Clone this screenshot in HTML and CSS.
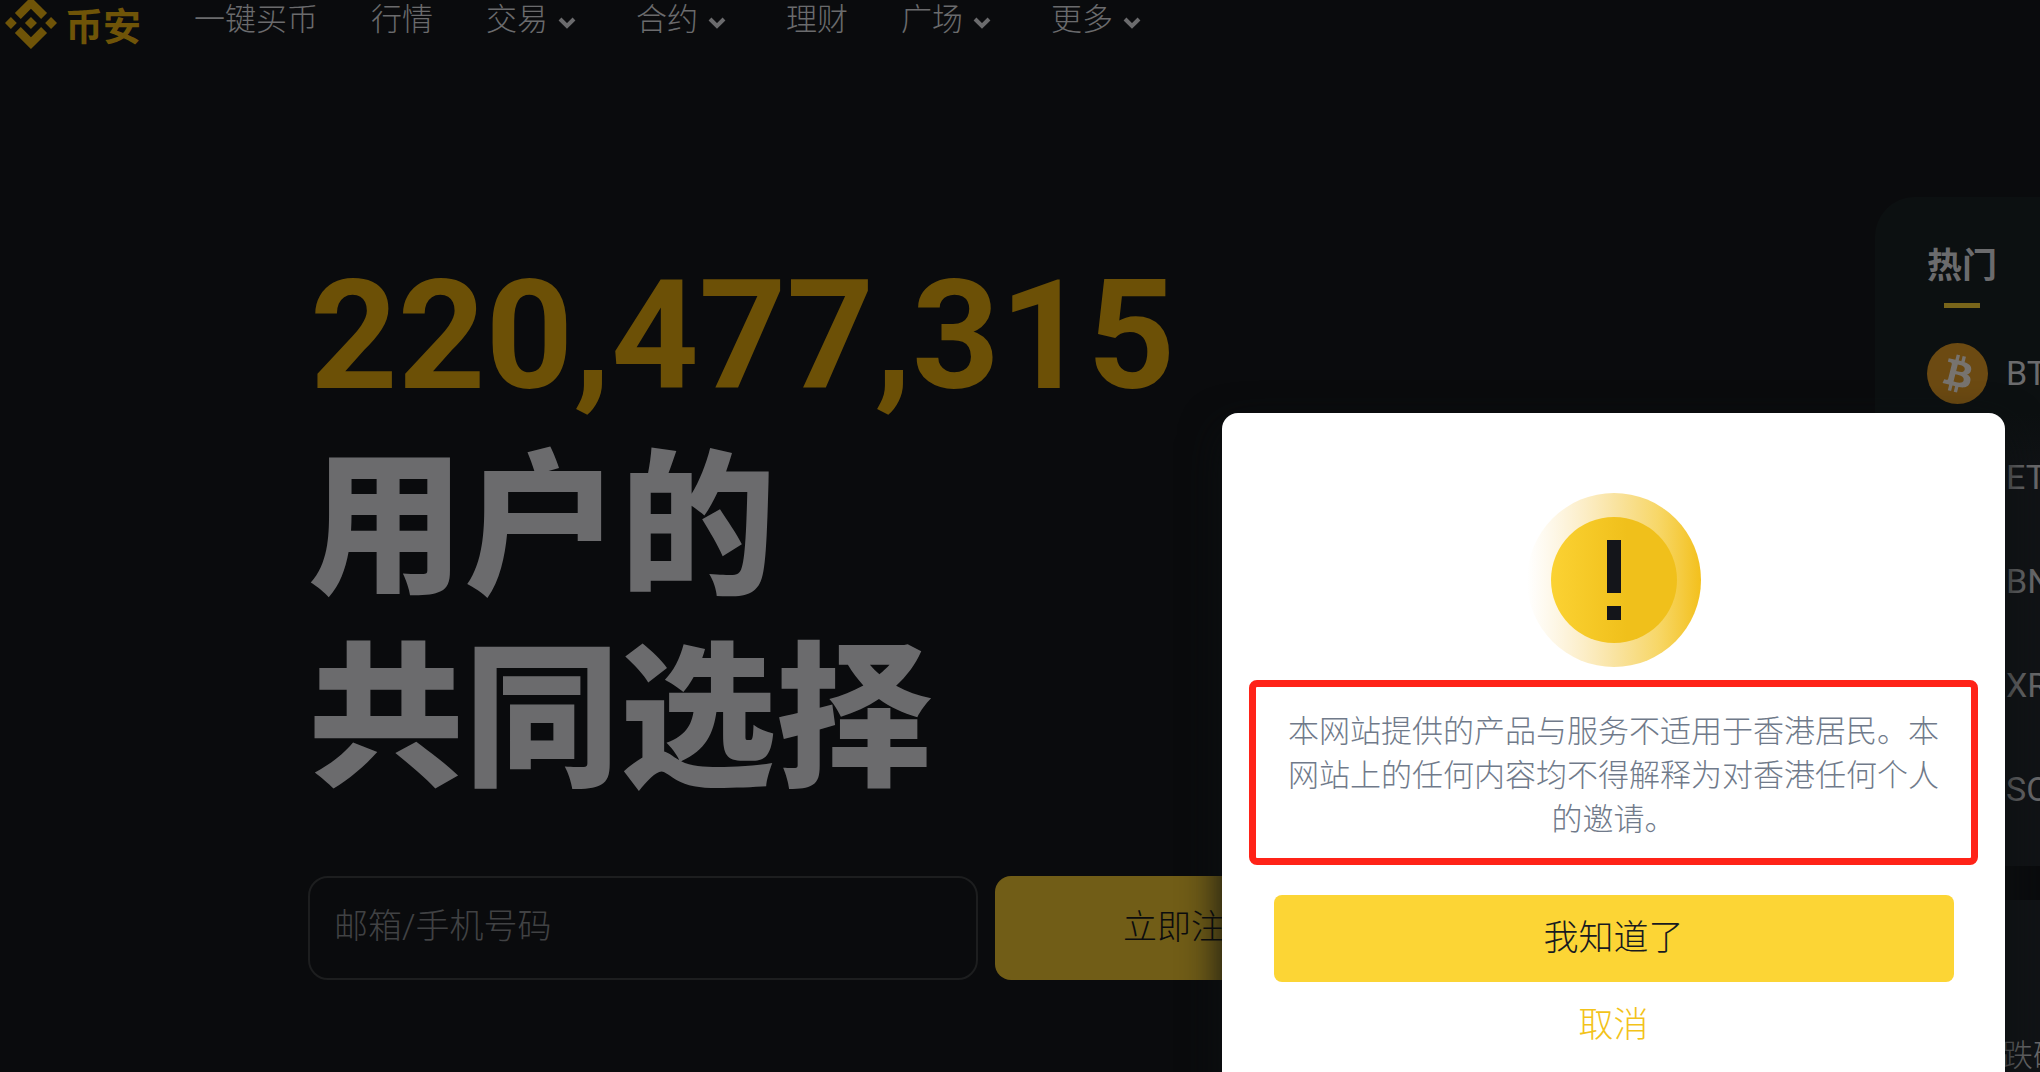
FILE: index.html
```html
<!DOCTYPE html>
<html lang="zh-CN">
<head>
<meta charset="utf-8">
<meta name="viewport" content="width=device-width, initial-scale=1">
<title>币安</title>
<link rel="stylesheet" href="styles.css">
</head>
<body>
<svg class="sprite" aria-hidden="true">
  <symbol id="chevron" viewBox="0 0 25 20"><path d="M2 7l7 7 7-7" fill="none" stroke="currentColor" stroke-width="4"/></symbol>
</svg>
<header class="header">
  <a class="brand" href="#">
    <svg class="brand-mark" viewBox="0 0 126 126" aria-hidden="true"><path fill="currentColor" d="M38.2 53.2L62.9 28.6l24.6 24.6 14.4-14.3L62.9 0 23.9 38.9zM0 63l14.300-14.300L28.600 63 14.300 77.300zM38.200 72.800l24.700 24.600 24.600-24.600 14.400 14.300-39 39-39-39zM97.300 63l14.300-14.300L126 63l-14.400 14.300zM77.500 63L62.900 48.400 48.300 63l14.600 14.500z"/></svg>
    <span>币安</span>
  </a>
  <nav class="nav">
    <a href="#">一键买币</a>
    <a href="#">行情</a>
    <a href="#">交易<svg class="chevron"><use href="#chevron"/></svg></a>
    <a href="#">合约<svg class="chevron"><use href="#chevron"/></svg></a>
    <a href="#">理财</a>
    <a href="#">广场<svg class="chevron"><use href="#chevron"/></svg></a>
    <a href="#">更多<svg class="chevron"><use href="#chevron"/></svg></a>
  </nav>
</header>
<main class="main">
  <section class="hero">
    <h1 class="headline"><span class="count">220,477,315</span><span>用户的</span><span>共同选择</span></h1>
    <form class="signup">
      <input class="signup-field" type="text" placeholder="邮箱/手机号码" aria-label="邮箱/手机号码">
      <button class="signup-button" type="button">立即注册</button>
    </form>
  </section>
  <aside class="side">
    <section class="panel">
      <h2 class="tab">热门</h2>
      <ul class="coins">
        <li><svg class="coin" viewBox="0 0 32 32" aria-hidden="true"><circle cx="16" cy="16" r="16" fill="#6c4a12"/><path fill="#77736f" d="M23.189 14.020c.314-2.096-1.283-3.223-3.465-3.975l.708-2.840-1.728-.43-.690 2.765c-.454-.114-.920-.220-1.385-.326l.695-2.783L15.596 6l-.708 2.839c-.376-.086-.746-.170-1.104-.260l.002-.009-2.384-.595-.460 1.846s1.283.294 1.256.312c.700.175.826.638.805 1.006l-.806 3.235c.048.012.110.030.180.057l-.183-.045-1.130 4.532c-.086.212-.303.531-.793.410.018.025-1.256-.313-1.256-.313l-.858 1.978 2.250.561c.418.105.828.215 1.231.318l-.715 2.872 1.727.430.708-2.840c.472.127.930.245 1.378.357l-.706 2.828 1.728.430.715-2.866c2.948.558 5.164.333 6.097-2.333.752-2.146-.037-3.385-1.588-4.192 1.130-.260 1.980-1.003 2.207-2.538zm-3.950 5.538c-.533 2.147-4.148.986-5.320.695l.950-3.805c1.172.293 4.929.872 4.370 3.110zm.535-5.569c-.487 1.953-3.495.960-4.470.717l.860-3.450c.975.243 4.118.696 3.610 2.733z"/></svg>BTC</li>
        <li><span class="coin"></span>ETH</li>
        <li><span class="coin"></span>BNB</li>
        <li><span class="coin"></span>XRP</li>
        <li><span class="coin"></span>SOL</li>
      </ul>
    </section>
    <section class="panel news">
      <p>跌破</p>
    </section>
  </aside>
</main>
<div class="modal" role="dialog" aria-modal="true" aria-describedby="notice">
  <svg class="alert" viewBox="0 0 174 174" aria-hidden="true">
    <defs>
      <linearGradient id="halo"><stop offset="0" stop-color="#f8c860" stop-opacity="0"/><stop offset=".5" stop-color="#f2c230" stop-opacity=".45"/><stop offset=".75" stop-color="#f4c628" stop-opacity=".7"/><stop offset="1" stop-color="#f3c01c"/></linearGradient>
      <linearGradient id="disc"><stop offset="0" stop-color="#fbd233"/><stop offset=".6" stop-color="#f0c01b"/></linearGradient>
    </defs>
    <circle cx="87" cy="87" r="87" fill="url(#halo)"/>
    <circle cx="87" cy="87" r="63" fill="url(#disc)"/>
    <path fill="#14151a" d="M80 47h14v53H80zM80 113h14v14H80z"/>
  </svg>
  <p class="notice" id="notice">本网站提供的产品与服务不适用于香港居民。本网站上的任何内容均不得解释为对香港任何个人的邀请。</p>
  <button class="confirm" type="button">我知道了</button>
  <button class="cancel" type="button">取消</button>
</div>
</body>
</html>
```
FILE: styles.css
```css
* {
  box-sizing: border-box;
}

body {
  margin: 0;
  height: 100vh;
  overflow: hidden;
  position: relative;
  background: #0a0b0d;
  color: #6b6b6d;
  font-family: Roboto, "Noto Sans CJK SC", sans-serif;
  font-weight: 300;
}

a {
  color: inherit;
  text-decoration: none;
}

button,
input {
  font: inherit;
  border: 0;
}

.sprite {
  display: none;
}

.header {
  display: flex;
  align-items: flex-start;
  height: 80px;
  padding-left: 5px;
}

.brand {
  display: flex;
  align-items: center;
  gap: 8px;
  width: 189px;
  height: 46px;
  color: #6f5408;
  font-size: 38px;
  font-weight: 700;
}

.brand-mark {
  flex: none;
  width: 52px;
  height: 52px;
}

.nav {
  display: flex;
  gap: 53px;
  font-size: 31px;
  line-height: 40px;
}

.nav a {
  display: flex;
  align-items: center;
  white-space: nowrap;
}

.chevron {
  width: 25px;
  height: 20px;
  margin: 4px 0 0 10px;
}

.main {
  display: flex;
  justify-content: space-between;
  align-items: flex-start;
  padding-left: 308px;
}

.hero {
  padding-top: 160px;
}

.headline {
  display: flex;
  flex-direction: column;
  margin: 0;
  font-size: 156px;
  font-weight: 900;
  line-height: 192px;
}

.count {
  padding-left: 2px;
  color: #6c5006;
  font-size: 153px;
  font-weight: 700;
}

.signup {
  display: flex;
  gap: 17px;
  margin-top: 60px;
  font-size: 34px;
}

.signup-field {
  width: 670px;
  height: 104px;
  padding: 0 24px 4px;
  border: 2px solid #1d1e1f;
  border-radius: 20px;
  background: transparent;
  color: #6b6b6d;
}

.signup-field::placeholder {
  color: #414244;
  opacity: 1;
}

.signup-button {
  width: 392px;
  height: 104px;
  padding: 0 0 8px;
  border-radius: 16px;
  background: #715d17;
  color: #0b0c0e;
}

.side {
  display: flex;
  flex-direction: column;
  gap: 34px;
  width: 165px;
  padding-top: 117px;
}

.panel {
  height: 669px;
  padding: 44px 0 0 52px;
  border-radius: 40px 0 0 0;
  background: linear-gradient(#0c1011 216px, #111316 280px);
  overflow: hidden;
}

.tab {
  display: flex;
  flex-direction: column;
  width: 70px;
  margin: 0;
  font-size: 35px;
  font-weight: 700;
  line-height: 52px;
}

.tab::after {
  content: "";
  width: 36px;
  height: 5px;
  margin: 10px 0 0 17px;
  background: #79651a;
}

.coins {
  margin: 13px 0 0;
  padding: 0;
  list-style: none;
}

.coins li {
  display: flex;
  align-items: center;
  gap: 18px;
  height: 104px;
  font-size: 34px;
  font-weight: 400;
}

.coin {
  flex: none;
  width: 61px;
  height: 61px;
}

.news {
  padding: 130px 0 0 127px;
  border-radius: 0;
  background: #111316;
  font-size: 31px;
  line-height: 52px;
}

.news p {
  margin: 0;
  white-space: nowrap;
}

.modal {
  position: absolute;
  top: 413px;
  right: 35px;
  width: 783px;
  display: flex;
  flex-direction: column;
  align-items: center;
  padding: 80px 27px 60px;
  border-radius: 16px;
  background: #fff;
  box-shadow: 0 16px 40px #0c1011;
}

.alert {
  width: 174px;
  height: 174px;
}

.notice {
  width: 100%;
  margin: 13px 0 30px;
  padding: 23px 24px 16px;
  border: 7px solid #ff2318;
  border-radius: 8px;
  color: #707a8a;
  font-size: 31px;
  line-height: 44px;
  text-align: center;
}

.confirm {
  width: 680px;
  height: 87px;
  padding: 0 0 8px;
  border-radius: 8px;
  background: #fcd535;
  color: #181a20;
  font-size: 35px;
}

.cancel {
  margin-top: 18px;
  padding: 0 20px;
  background: none;
  color: #f3c31a;
  font-size: 35px;
  line-height: 52px;
}
```
